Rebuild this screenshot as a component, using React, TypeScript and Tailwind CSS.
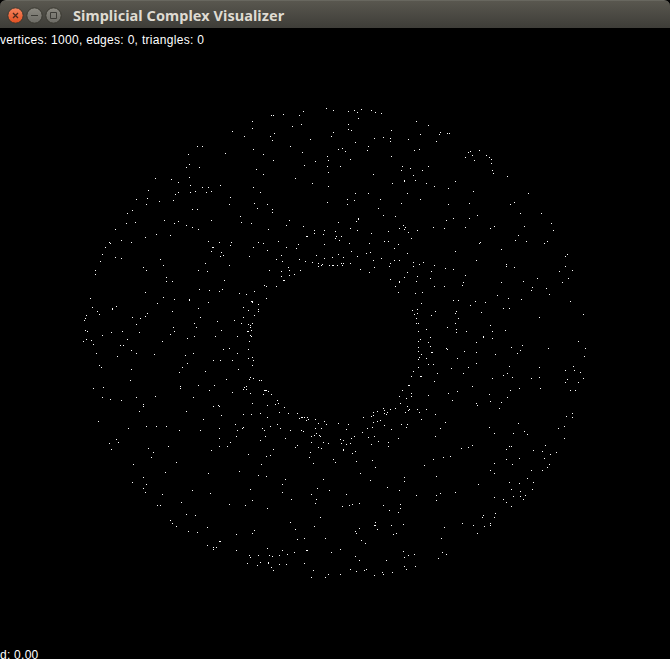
import React from "react";

type Tile = { x: number; y: number; points: string };

// Vertices grouped by viewport tile; coordinates are in thirds of a pixel from the tile's corner.
const tiles: Tile[] = [
  {
    x: 75,
    y: 100,
    points:
      "472,94 508,109 367,139 382,139 340,163 451,160 343,193 334,202 373,202 241,235 289,238 310,247 343,232 346,256 382,262 400,262 436,256 220,271 301,283 310,277 346,277 361,274 394,277 409,274 184,298 217,295 214,313 253,304 295,301 466,292 463,313 172,331 157,340 352,328 367,328 496,349 499,367 154,370 181,367 268,361 298,370 310,364 334,376 352,382 370,388 409,361 121,388 139,421 169,427 211,412 244,403 286,406 103,427 106,430 91,442 82,463 76,484 121,472 139,475 256,478 400,424 433,427 469,427 466,436 412,442 415,442 409,454 439,457 436,469 445,466 391,490 523,469",
  },
  {
    x: 250,
    y: 100,
    points:
      "229,25 250,31 295,34 313,31 322,37 334,28 364,31 376,37 394,40 325,55 64,46 70,46 100,43 148,46 160,34 154,73 127,79 7,64 7,85 73,100 61,109 67,121 181,118 121,139 157,157 250,97 244,109 295,73 295,88 304,91 316,127 373,115 400,112 421,115 421,124 424,91 499,64 511,103 475,118 10,148 40,163 70,181 163,196 196,184 232,169 235,181 232,199 235,217 265,148 277,145 286,154 301,178 271,199 352,151 355,139 424,169 493,151 508,148 19,208 40,223 136,235 187,250 235,259 10,262 31,277 370,223 457,199 454,211 481,205 517,211 490,226 496,241 463,241 463,244 427,250 316,280 355,280 472,280 292,298 313,301 292,313 232,307 391,298 454,310 511,298 13,310 22,325 52,313 67,328 67,337 385,325 400,346 436,349 118,361 109,376 4,370 55,388 160,379 193,391 193,400 223,391 220,403 265,367 319,364 325,355 325,358 301,385 322,391 256,394 259,409 256,415 274,409 268,421 364,400 415,394 448,385 460,376 466,382 463,388 475,397 502,391 484,415 169,409 172,409 25,427 40,430 85,424 10,442 52,451 109,442 145,433 139,445 223,433 298,430 358,430 403,424 415,424 445,433 433,445 304,454 349,460 361,457 94,466 79,478 97,484 148,478 166,484 199,466 187,487 205,490 217,493 223,475 247,472 265,463 280,472 274,490 280,490 301,490 322,469 370,481 394,475 433,481 448,481 421,490 472,460 490,487 508,493 520,487",
  },
  {
    x: 425,
    y: 100,
    points:
      "10,76 46,97 43,103 67,100 73,100 34,124 130,157 136,154 163,151 142,166 121,172 148,181 184,166 193,172 199,178 199,190 10,199 202,211 205,220 247,229 4,250 28,259 70,265 91,244 145,274 310,280 70,313 133,310 256,313 268,307 64,361 85,355 133,355 157,346 286,340 349,340 25,382 58,385 121,382 196,385 208,379 298,379 379,370 385,391 280,406 271,421 304,424 358,430 367,424 163,430 166,427 229,448 91,454 154,481 244,493 421,469 427,463",
  },
  {
    x: 75,
    y: 265,
    points:
      "61,16 61,28 205,7 214,16 265,1 463,1 370,16 397,19 274,37 274,49 292,49 448,46 211,82 373,73 403,76 433,79 442,73 493,85 514,88 46,100 265,97 298,103 343,103 343,106 247,115 400,112 52,127 67,139 73,148 112,130 112,133 124,124 370,130 505,127 520,136 292,139 34,151 31,160 28,166 172,157 196,160 211,154 217,145 376,157 505,157 427,169 478,166 499,175 520,178 184,178 358,175 364,187 295,187 298,199 286,208 31,196 37,199 82,211 109,202 142,199 193,202 439,196 517,199 520,199 358,214 421,214 487,214 337,220 25,229 34,223 49,226 55,238 157,223 136,241 145,241 262,229 523,229 169,256 184,265 64,265 127,274 238,268 331,271 355,265 445,253 463,250 520,253 487,265 415,286 436,286 472,286 520,280 337,295 322,307 313,322 73,301 79,307 169,313 391,319 490,313 166,346 454,343 523,343 55,370 85,367 316,364 316,370 370,361 403,376 418,361 472,382 505,373 508,367 514,364 514,373 82,397 106,403 139,406 184,397 241,394 355,397 205,418 205,424 193,439 334,439 415,424 430,421 433,424 439,451 505,448 385,463 70,469 160,490 214,484 244,484 274,484 433,490 481,478 502,490 505,487",
  },
  {
    x: 250,
    y: 265,
    points:
      "115,7 118,16 94,19 58,16 151,16 133,28 118,31 94,34 100,46 103,46 43,61 49,64 79,64 13,79 49,100 4,109 7,109 7,112 25,118 25,133 25,139 13,151 205,4 214,1 238,1 247,1 250,1 262,1 277,1 331,13 373,7 358,22 418,4 490,4 472,22 463,37 502,34 499,49 421,43 448,49 448,52 436,64 445,82 496,85 517,82 514,115 487,136 502,133 502,145 493,148 499,160 499,175 505,175 505,199 511,223 505,229 505,247 505,259 514,268 508,277 505,283 505,307 490,319 484,334 511,334 514,334 7,175 1,181 1,187 4,196 1,211 4,214 7,277 10,286 7,301 1,337 10,340 28,346 34,346 43,376 46,376 49,376 55,379 40,388 64,388 1,385 82,406 85,415 76,418 52,421 7,415 103,427 88,442 115,445 142,445 31,445 4,448 52,457 148,460 154,457 157,457 163,457 172,457 175,463 169,466 196,463 223,469 205,475 229,478 265,475 295,478 82,478 61,484 37,490 91,490 196,490 214,490 289,493 340,457 370,442 382,439 370,451 364,454 400,430 403,436 403,445 412,442 409,448 421,433 436,430 451,415 448,394 457,376 475,361 478,361 484,385 484,394 469,400 472,424 478,433 475,436 466,442 502,433 508,442 514,463 370,472 382,469 391,466 403,481 367,487 352,490 454,478 472,478 469,487 424,493",
  },
  {
    x: 425,
    y: 265,
    points:
      "28,1 19,19 61,10 85,13 121,31 16,40 28,64 58,64 115,52 112,61 244,4 268,7 229,52 295,49 337,40 322,67 319,76 364,70 373,88 403,19 421,4 442,16 430,40 412,52 217,91 250,100 289,103 85,106 100,106 151,109 181,112 136,121 235,130 253,130 436,109 31,139 19,151 94,139 91,145 100,160 169,142 475,148 343,157 91,175 67,187 94,193 94,202 4,193 124,199 196,181 202,199 241,196 175,214 175,217 202,220 16,217 10,232 16,244 154,232 259,247 292,241 286,256 277,265 64,250 67,253 118,259 154,262 19,262 22,262 211,268 370,250 460,229 481,250 478,274 4,280 97,280 10,298 25,298 154,295 130,307 79,310 37,325 115,325 253,304 343,307 445,304 421,316 448,316 466,322 235,331 247,325 262,337 202,340 319,340 343,337 427,343 421,352 460,352 475,340 28,349 142,364 97,379 70,385 256,376 283,370 346,370 436,376 451,376 10,391 193,388 247,397 82,406 196,409 229,412 154,415 157,421 223,430 4,433 31,448 442,445 442,457 424,454 61,472 280,475 46,490 193,487 400,490 418,484",
  },
  {
    x: 75,
    y: 430,
    points:
      "313,1 376,1 487,1 484,19 433,25 124,28 130,37 103,40 109,58 466,37 433,49 457,49 280,49 220,55 235,67 409,61 229,82 520,73 304,97 175,103 271,127 400,130 493,124 205,142 172,157 214,163 205,175 211,187 262,193 352,181 406,190 319,217 247,226 256,226 463,223 511,226 334,253 361,256 286,271 292,280 304,289 397,292 340,304 367,307 484,313 433,334 436,334 397,346 415,352 424,352 415,358 484,361 523,376 517,400",
  },
  {
    x: 250,
    y: 430,
    points:
      "43,1 121,1 154,1 160,4 46,19 31,31 106,25 199,10 193,16 184,19 208,16 211,19 184,37 220,37 235,40 337,7 313,19 304,25 271,28 280,31 274,40 289,43 301,40 355,22 373,19 385,34 364,43 415,37 415,49 445,25 142,46 136,52 205,52 214,55 70,58 181,67 280,58 280,61 316,64 307,70 61,76 49,79 178,82 250,88 256,97 190,100 34,103 319,94 367,91 376,112 523,106 331,130 25,136 49,139 106,148 97,163 220,148 361,151 463,142 463,154 1,178 97,187 202,175 238,181 412,172 448,181 184,193 289,193 499,196 7,211 124,208 199,208 196,220 277,229 298,226 307,223 328,220 400,226 451,223 451,235 418,241 445,247 52,235 211,262 121,277 376,277 373,286 376,286 424,286 460,283 193,289 136,298 328,295 382,298 13,301 7,310 316,304 319,310 439,310 430,313 142,328 163,325 226,325 334,331 346,340 52,355 97,361 169,361 172,361 271,358 133,367 244,367 112,373 460,364 25,376 58,376 67,379 88,376 1,382 316,379 475,376 493,373 463,382 328,391 409,391 31,397 55,397 55,400 22,406 88,403 109,403 163,400 64,412 70,421 463,409 496,409 469,418 190,421 301,418 319,424 343,421 349,418 397,427 400,433 427,427 373,436 235,433 271,433 184,442 226,442",
  },
  {
    x: 425,
    y: 430,
    points:
      "31,19 208,10 265,10 298,4 307,13 418,25 142,46 130,52 109,55 253,49 259,49 244,58 361,46 325,61 352,64 376,73 394,67 76,79 55,82 25,88 244,88 283,85 358,85 208,100 262,103 373,103 367,112 196,121 208,130 319,121 352,121 34,139 307,145 160,163 253,157 283,160 325,157 259,178 322,178 286,184 91,187 46,190 34,196 34,211 265,199 286,199 301,196 295,208 208,202 235,208 244,217 259,229 211,250 175,256 172,262 208,262 112,280 196,280 196,286 145,286 178,289 58,292 157,310 49,325 52,367 64,373 40,385",
  },
];

const cloud = tiles
  .flatMap((t) =>
    t.points.split(" ").map((p) => {
      const [x, y] = p.split(",").map(Number);
      return `M${t.x + Math.floor(x / 3)} ${t.y + Math.floor(y / 3) - 28}h1v1h-1z`;
    }),
  )
  .join("");

function WindowButtons() {
  return (
    <svg width="62" height="28" viewBox="0 0 62 28" fill="none" className="block shrink-0">
      <defs>
        <linearGradient id="close" x1="0" y1="0" x2="0" y2="1">
          <stop stopColor="#f6855f" />
          <stop offset="1" stopColor="#e24f20" />
        </linearGradient>
        <linearGradient id="plain" x1="0" y1="0" x2="0" y2="1">
          <stop stopColor="#8c8a82" />
          <stop offset="1" stopColor="#6c6b65" />
        </linearGradient>
      </defs>
      <circle cx="15.5" cy="14.5" r="7.7" fill="url(#close)" stroke="#38372f" />
      <circle cx="34.5" cy="14.5" r="7.7" fill="url(#plain)" stroke="#38372f" />
      <circle cx="53.5" cy="14.5" r="7.7" fill="url(#plain)" stroke="#38372f" />
      <path d="m13 12 5 5m0-5-5 5" stroke="#4b291c" strokeWidth="1.3" />
      <path d="M31 14.5h7" stroke="#3c3b36" />
      <path d="M50.5 11.5h6v6h-6z" stroke="#3c3b36" />
    </svg>
  );
}

export default function App() {
  return (
    <div className="flex h-[659px] w-[670px] flex-col overflow-hidden bg-black font-['Liberation_Sans',sans-serif] text-white">
      <header className="flex h-7 shrink-0 items-center rounded-t-md border-t border-[#68675f] bg-linear-to-b from-[#59574f] to-[#3e3d38]">
        <WindowButtons />
        <h1 className="ml-[11px] whitespace-nowrap font-['Noto_Sans',sans-serif] text-[14.5px] leading-7 font-bold tracking-[0.06px] text-[#dfdbd2]">
          Simplicial Complex Visualizer
        </h1>
      </header>
      <main className="grid flex-1 grid-cols-1 grid-rows-1">
        <svg
          width="670"
          height="631"
          viewBox="0 0 670 631"
          shapeRendering="crispEdges"
          className="col-start-1 row-start-1"
        >
          <path d={cloud} fill="#fff" />
        </svg>
        <div className="col-start-1 row-start-1 flex flex-col justify-between text-[12px] leading-4">
          <p className="pt-1 tracking-[0.3px] whitespace-nowrap">vertices: 1000, edges: 0, triangles: 0</p>
          <p className="leading-[8px] tracking-[0.26px] whitespace-nowrap">d: 0.00</p>
        </div>
      </main>
    </div>
  );
}
